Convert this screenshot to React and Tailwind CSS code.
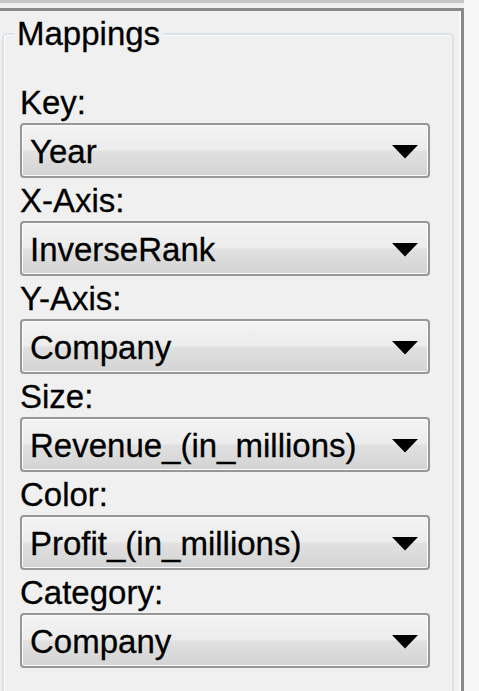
// Mappings panel: group box with six combo boxes
const rows = [
  { label: "Key:", value: "Year" },
  { label: "X-Axis:", value: "InverseRank" },
  { label: "Y-Axis:", value: "Company" },
  { label: "Size:", value: "Revenue_(in_millions)" },
  { label: "Color:", value: "Profit_(in_millions)" },
  { label: "Category:", value: "Company" },
];

function Combo({ value }) {
  return (
    <div className="relative h-[55px] w-[410px] shrink-0 box-border rounded-[4px] border-2 border-[#979797] bg-[linear-gradient(#f3f3f3_0%,#ececec_48%,#e0e0e0_52%,#d3d3d3_100%)] shadow-[inset_0_0_0_1px_#fbfbfb]">
      <div className="pl-[8px] pt-[2px] leading-[49px] text-[33px] text-black whitespace-nowrap [-webkit-text-stroke:0.3px_black]">
        {value}
      </div>
      <svg
        className="absolute right-[10px] top-[20px]"
        width="26"
        height="14"
        viewBox="0 0 26 14"
      >
        <polygon points="0,0 26,0 13,13.5" fill="#000" />
      </svg>
    </div>
  );
}

export default function App() {
  return (
    <div
      className="w-[479px] h-[691px] overflow-hidden flex bg-[#f7f7f7]"
      style={{ fontFamily: '"Liberation Sans", Arial, sans-serif' }}
    >
      <div className="w-[464px] h-full flex flex-col">
        <div className="h-[3px] shrink-0 bg-[#c6c6c6]" />
        <div className="h-[5px] shrink-0 bg-[#f0f0f0]" />
        <div className="flex-1 min-h-0 overflow-hidden border-t-[3px] border-r-[3px] border-[#8a8a8a] bg-[#f0f0f0]">
          <div className="h-full border-r-2 border-[#fbfbfb] pl-[2px] pr-[5px] pt-[22px]">
            <div className="relative h-[700px] rounded-[5px] border-2 border-[#d9e2e8] shadow-[inset_1px_1px_0_#ffffff]">
              <div className="absolute left-[10px] -top-[23px] px-[3px] bg-[#f0f0f0] text-[33px] leading-[43px] text-black [-webkit-text-stroke:0.3px_black]">
                Mappings
              </div>
              <div className="pt-[45px] pl-[16px]">
                {rows.map((r) => (
                  <div key={r.label}>
                    <div className="h-[43px] leading-[45px] text-[33px] text-black whitespace-nowrap [-webkit-text-stroke:0.3px_black]">
                      {r.label}
                    </div>
                    <Combo value={r.value} />
                  </div>
                ))}
              </div>
            </div>
          </div>
        </div>
      </div>
    </div>
  );
}
